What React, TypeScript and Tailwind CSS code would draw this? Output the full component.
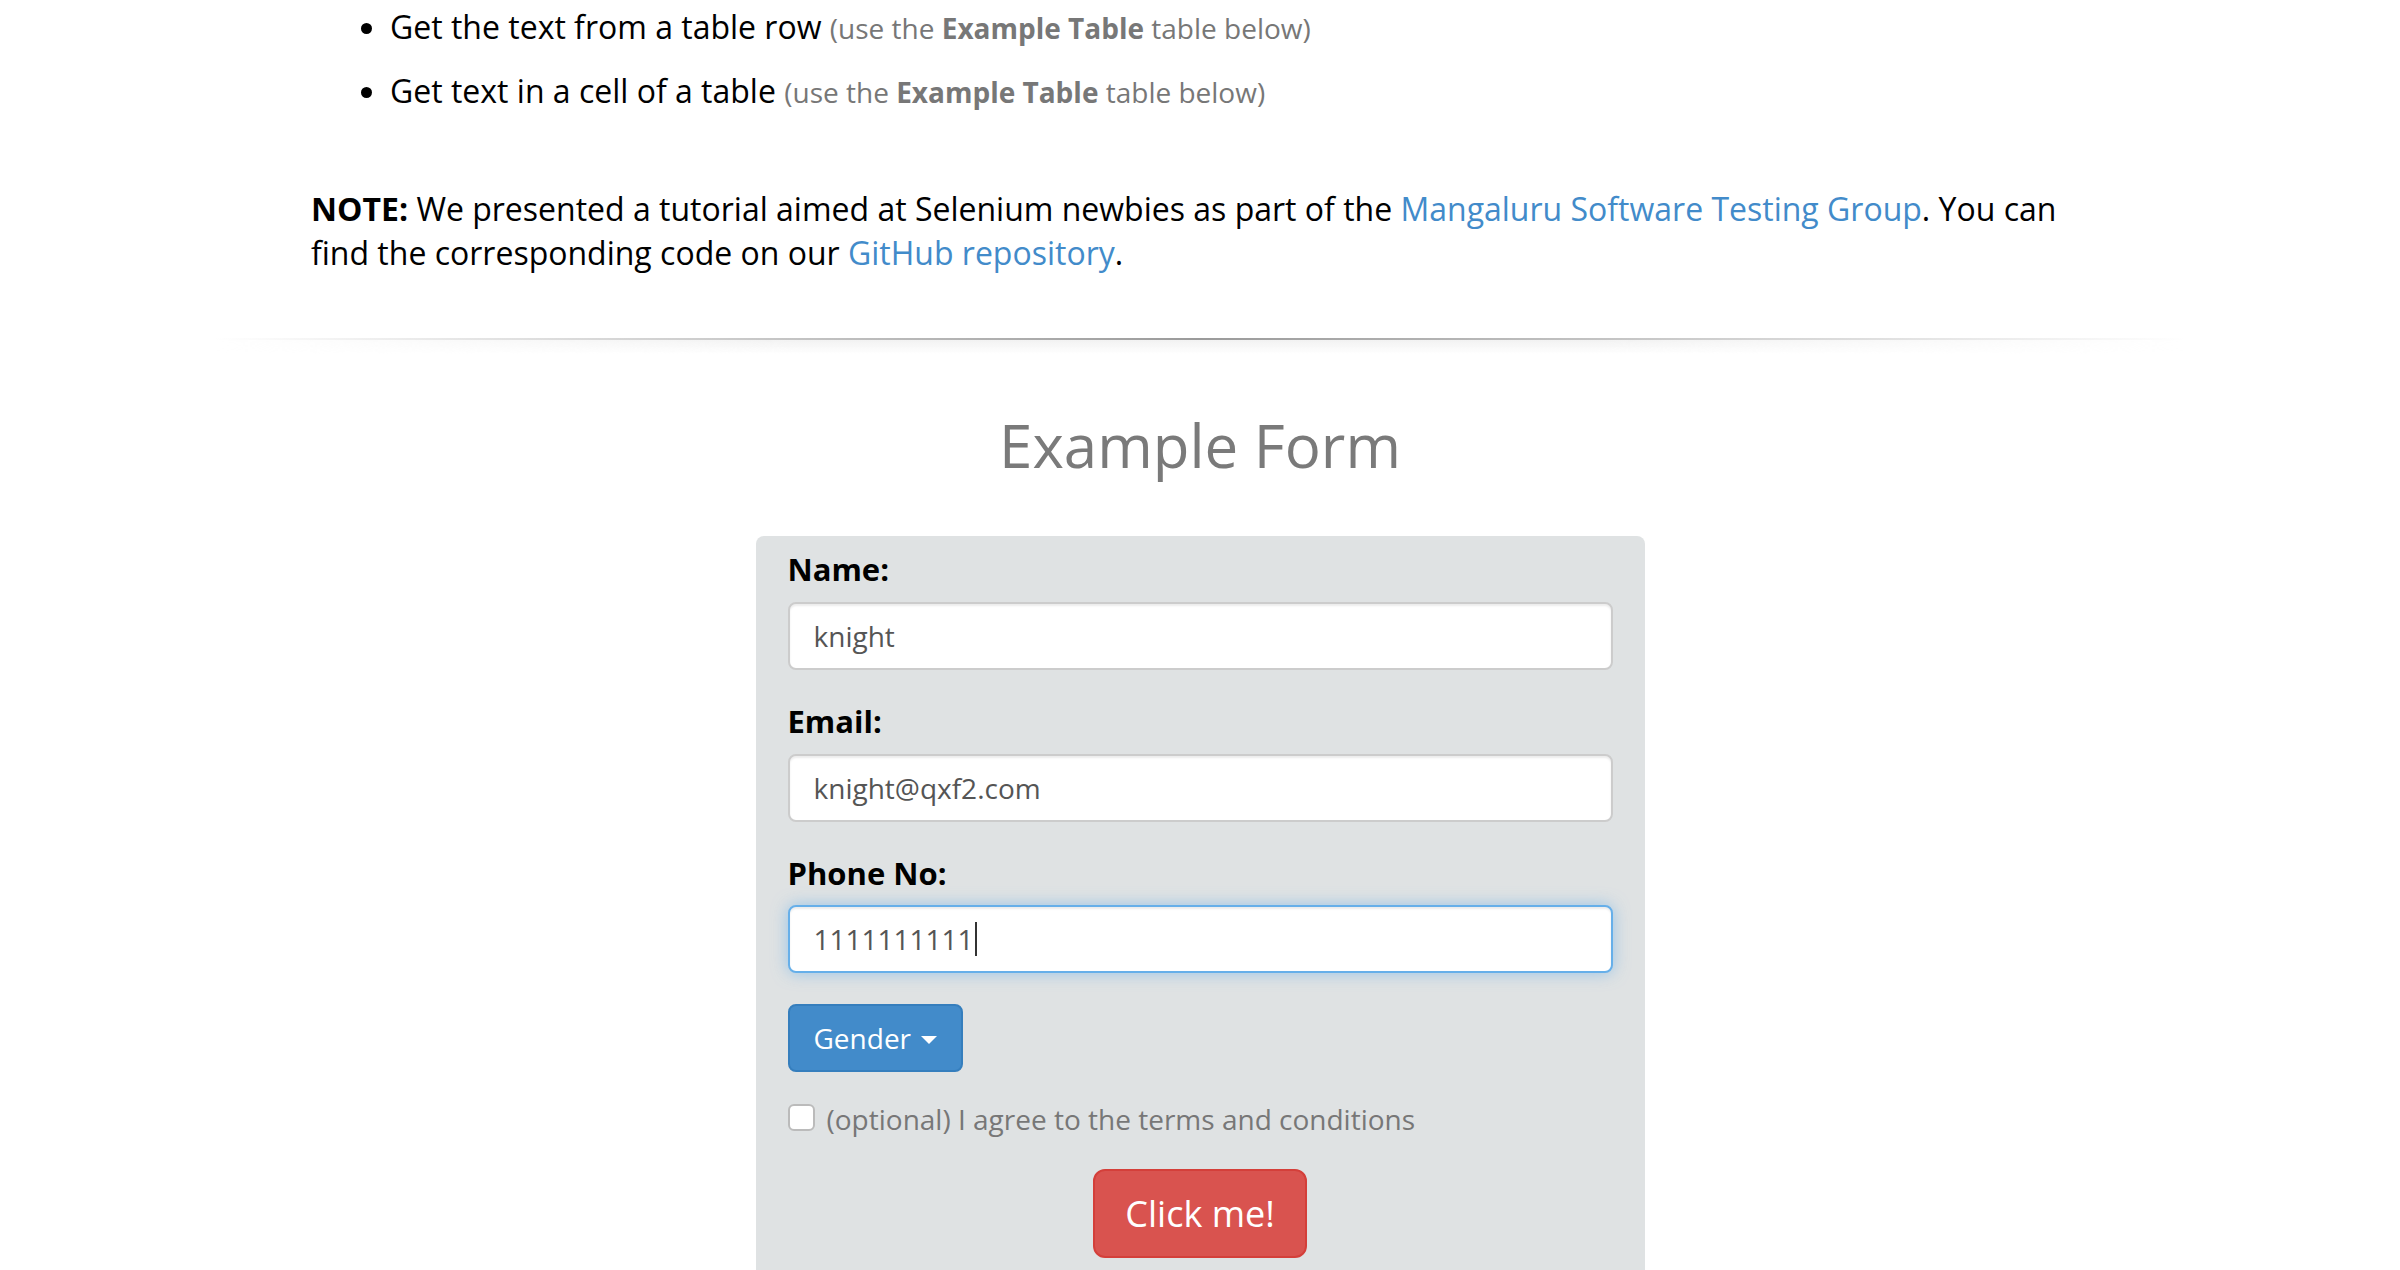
import React from "react";

const fieldClass =
  "block w-full h-[68px] rounded-[8px] border-2 border-[#cccccc] bg-white px-[24px] text-[28px] text-[#555555] shadow-[inset_0_2px_2px_rgba(0,0,0,0.075)] outline-none";

function Field({ label, value }: { label: string; value: string }) {
  return (
    <div className="mb-[31px]">
      <label className="mb-[13px] block text-[31px] font-bold leading-[40px] text-black">
        {label}
      </label>
      <input readOnly defaultValue={value} className={fieldClass} />
    </div>
  );
}

export default function App() {
  return (
    <div className="min-h-screen bg-white font-['Open_Sans',sans-serif] text-black">
      <div className="mx-auto w-[1972px]">
        <div className="px-[97px]">
          {/* tutorial list */}
          <ul className="mt-[5px] list-disc pl-[79px] text-[32px] leading-[44px]">
            <li className="mb-[19px]">
              Get the text from a table row{" "}
              <small className="text-[28px] text-[#777777]">
                (use the <b>Example Table</b> table below)
              </small>
            </li>
            <li className="mb-[19px]">
              Get text in a cell of a table{" "}
              <small className="text-[28px] text-[#777777]">
                (use the <b>Example Table</b> table below)
              </small>
            </li>
          </ul>

          <p className="mt-[73px] text-[32px] leading-[44px]">
            <b>NOTE:</b> We presented a tutorial aimed at Selenium newbies as part of the{" "}
            <a className="text-[#428bca]">Mangaluru Software Testing Group</a>. You can
            find the corresponding code on our{" "}
            <a className="text-[#428bca]">GitHub repository</a>.
          </p>
        </div>

        {/* divider */}
        <div className="mt-[63px] h-[2px] bg-gradient-to-r from-transparent via-[#9a9a9a] to-transparent" />
        <div className="h-[14px] bg-gradient-to-b from-[#f2f2f2] to-transparent [mask-image:linear-gradient(to_right,transparent,black_30%,black_70%,transparent)]" />
      </div>

      <h2 className="mt-[55px] text-center text-[60px] leading-[72px] text-[#7a7a7a]">
        Example Form
      </h2>

      <div className="mx-auto mt-[55px] w-[889px] rounded-t-[8px] bg-[#dfe2e3] px-[32px] pt-[13px] pb-[40px]">
        <Field label="Name:" value="knight" />
        <Field label="Email:" value="knight@qxf2.com" />

        <div className="mb-[31px]">
          <label className="mb-[12px] block text-[31px] font-bold leading-[40px] text-black">
            Phone No:
          </label>
          <div className="flex h-[68px] w-full items-center rounded-[8px] border-2 border-[#66afe9] bg-white px-[24px] text-[28px] text-[#555555] shadow-[inset_0_2px_2px_rgba(0,0,0,0.075),0_0_16px_rgba(102,175,233,0.6)]">
            <span>1111111111</span>
            <span className="ml-[1px] h-[34px] w-[2px] bg-[#333333]" />
          </div>
        </div>

        <button className="flex h-[68px] items-center gap-[10px] rounded-[8px] border-2 border-[#357ebd] bg-[#428bca] px-[24px] text-[28px] text-white">
          Gender
          <span className="mt-[4px] h-0 w-0 border-x-[8px] border-t-[8px] border-x-transparent border-t-white" />
        </button>

        <div className="mt-[27px] flex items-center gap-[12px]">
          <span className="-mt-[4px] h-[27px] w-[27px] rounded-[6px] border-2 border-[#bbbbbb] bg-white" />
          <span className="text-[28px] leading-[40px] text-[#777777]">
            (optional) I agree to the terms and conditions
          </span>
        </div>

        <div className="mt-[30px] flex justify-center">
          <button className="h-[89px] rounded-[12px] border-2 border-[#d43f3a] bg-[#d9534f] px-[30px] text-[36px] text-white">
            Click me!
          </button>
        </div>
      </div>
    </div>
  );
}
